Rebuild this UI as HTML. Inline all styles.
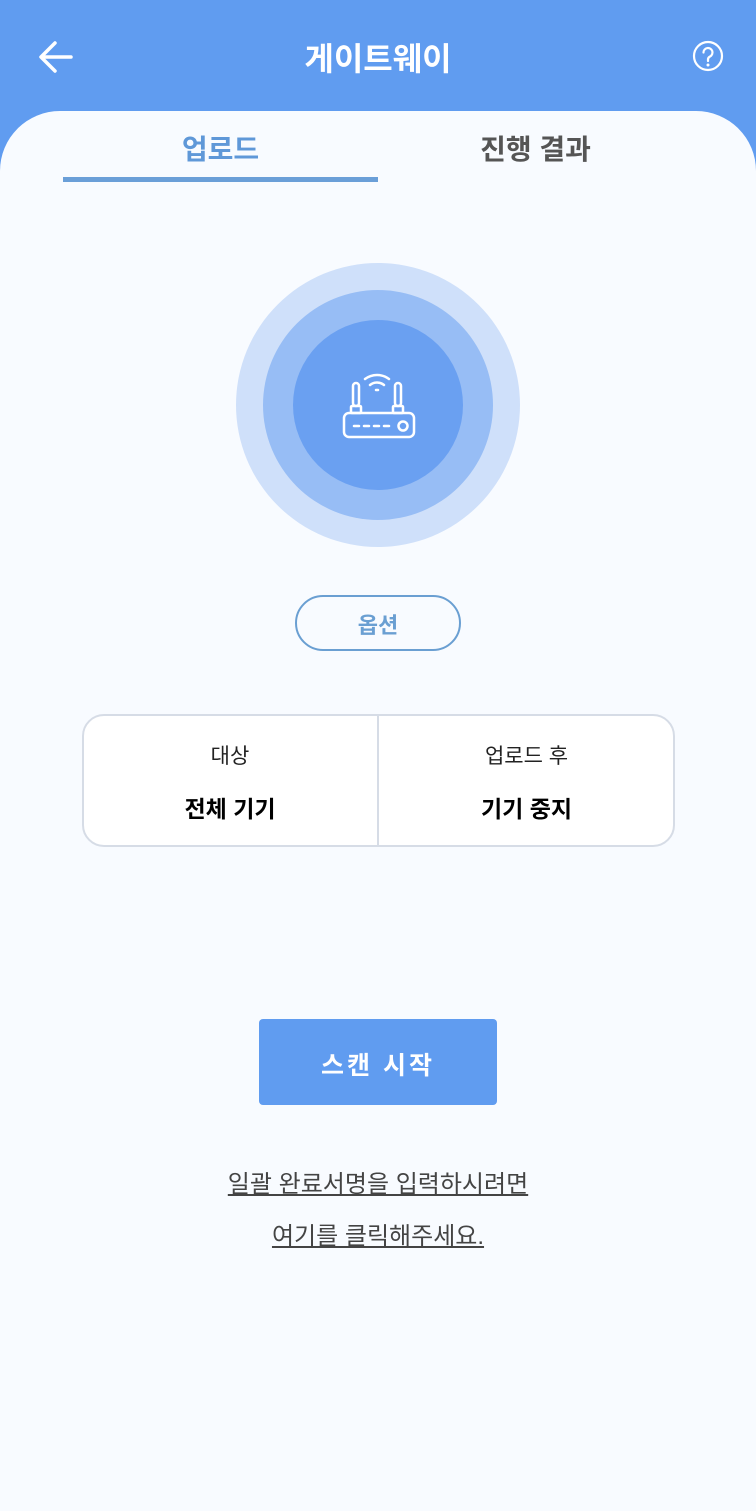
<!DOCTYPE html>
<html><head><meta charset="utf-8"><style>
*{margin:0;padding:0;box-sizing:border-box}
body{width:756px;height:1492px;background:#609cf0;font-family:"Liberation Sans","Noto Sans CJK KR",sans-serif;position:relative;overflow:hidden}
.abs{position:absolute}
.sheet{position:absolute;left:0;top:111px;width:756px;height:1400px;background:#f8fbff;border-radius:60px 60px 0 0}
.t{position:absolute;white-space:nowrap;text-align:center}
</style></head><body>
<svg class="abs" style="left:38px;top:40px" width="36" height="34" viewBox="0 0 36 34"><path d="M33 17H4M17 3L3 17l14 14" stroke="#fff" stroke-width="3.5" fill="none" stroke-linecap="round" stroke-linejoin="round"/></svg>
<div class="t" style="left:0;width:756px;top:34px;font-size:32px;font-weight:bold;color:#fff">게이트웨이</div>
<svg class="abs" style="left:692px;top:40px" width="32" height="32" viewBox="0 0 32 32"><circle cx="16" cy="16" r="14" stroke="#fff" stroke-width="2.2" fill="none"/><path d="M11.5 12.5a4.5 4.5 0 1 1 6.5 4c-1.3.7-2 1.5-2 3v1.5" stroke="#fff" stroke-width="2.2" fill="none" stroke-linecap="round"/><circle cx="16" cy="25" r="1.5" fill="#fff"/></svg>
<div class="sheet"></div>
<div class="t" style="left:63px;width:315px;top:128px;font-size:28px;color:#5f98d8;font-weight:bold">업로드</div>
<div class="t" style="left:378px;width:315px;top:128px;font-size:28px;color:#555;font-weight:bold">진행 결과</div>
<div class="abs" style="left:63px;top:177px;width:315px;height:5px;background:#6a9fd8"></div>
<div class="abs" style="left:236px;top:263px;width:284px;height:284px;border-radius:50%;background:#cfe0fa"></div>
<div class="abs" style="left:263px;top:290px;width:230px;height:230px;border-radius:50%;background:#97bdf5"></div>
<div class="abs" style="left:293px;top:320px;width:170px;height:170px;border-radius:50%;background:#6aa0f1"></div>
<svg class="abs" style="left:320px;top:350px" width="120" height="100" viewBox="0 0 120 100">
<g stroke="#fff" stroke-width="2.5" fill="none" stroke-linecap="round" stroke-linejoin="round">
<rect x="24" y="63" width="70" height="24" rx="5"/>
<rect x="31" y="56" width="10" height="7" rx="1"/><rect x="73" y="56" width="10" height="7" rx="1"/>
<rect x="33" y="33" width="6" height="23" rx="3"/><rect x="75" y="33" width="6" height="23" rx="3"/>
<path d="M45 29a20 20 0 0 1 24 0M50 35a11 11 0 0 1 14 0"/>
<path d="M56 40h2"/>
<path d="M34 76h5M44 76h5M54 76h5M64 76h5"/>
<circle cx="83" cy="76" r="4.5"/>
</g></svg>
<div class="abs" style="left:295px;top:595px;width:166px;height:56px;border:2px solid #6a9fd2;border-radius:28px"></div>
<div class="t" style="left:295px;width:166px;top:608px;font-size:22px;color:#6a9fd2;font-weight:bold">옵션</div>
<div class="abs" style="left:82px;top:714px;width:593px;height:133px;border:2px solid #d6dce6;border-radius:22px;background:#fff"></div>
<div class="abs" style="left:377px;top:716px;width:2px;height:129px;background:#d6dce6"></div>
<div class="t" style="left:82px;width:296px;top:740px;font-size:21px;color:#222">대상</div>
<div class="t" style="left:82px;width:296px;top:790px;font-size:23px;color:#000;font-weight:bold">전체 기기</div>
<div class="t" style="left:378px;width:297px;top:740px;font-size:21px;color:#222">업로드 후</div>
<div class="t" style="left:378px;width:297px;top:790px;font-size:23px;color:#000;font-weight:bold">기기 중지</div>
<div class="abs" style="left:259px;top:1019px;width:238px;height:86px;background:#609cf0;border-radius:4px"></div>
<div class="t" style="left:259px;width:238px;top:1046px;font-size:25px;color:#fff;font-weight:bold;letter-spacing:3px">스캔 시작</div>
<div class="t" style="left:0;width:756px;top:1164px;font-size:24px;color:#444;text-decoration:underline">일괄 완료서명을 입력하시려면</div>
<div class="t" style="left:0;width:756px;top:1216px;font-size:24px;color:#444;text-decoration:underline">여기를 클릭해주세요.</div>
</body></html>
